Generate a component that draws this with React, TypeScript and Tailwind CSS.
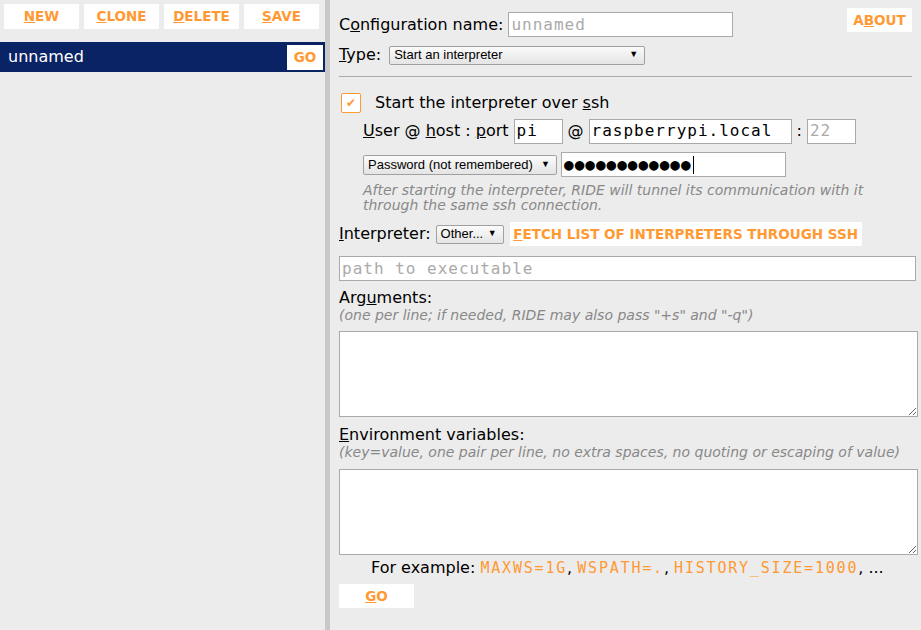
import React from 'react';

const orange = 'text-[#ff9933]';

function Btn({ children, className = '' }: { children: React.ReactNode; className?: string }) {
  return (
    <div
      className={`flex items-center justify-center bg-white font-['DejaVu_Sans',sans-serif] text-[13.5px] font-bold ${orange} ${className}`}
    >
      {children}
    </div>
  );
}

function Select({ label, className = '' }: { label: string; className?: string }) {
  return (
    <div
      className={`flex items-center justify-between rounded-[2px] border border-[#a0a0a0] bg-gradient-to-b from-[#fbfbfb] to-[#e4e4e4] pl-[4px] pr-[6px] font-['Liberation_Sans',sans-serif] text-[13px] text-black ${className}`}
    >
      <span>{label}</span>
      <span className="text-[9px]">▼</span>
    </div>
  );
}

const mono = "font-['DejaVu_Sans_Mono',monospace] text-[16px] tracking-[1px]";
const exMono = `${orange} font-['DejaVu_Sans_Mono',monospace] text-[15px] tracking-[1.8px]`;

export default function App() {
  return (
    <div className="flex h-[630px] w-[921px] overflow-hidden bg-[#ececec] font-['DejaVu_Sans',sans-serif] text-[16px] text-black">
      {/* left list */}
      <div className="w-[325px] shrink-0">
        <div className="flex gap-[5px] px-[4px] pt-[4px]">
          <Btn className="h-[25px] w-[75px]"><u>N</u>EW</Btn>
          <Btn className="h-[25px] w-[75px]"><u>C</u>LONE</Btn>
          <Btn className="h-[25px] w-[75px]"><u>D</u>ELETE</Btn>
          <Btn className="h-[25px] w-[75px]"><u>S</u>AVE</Btn>
        </div>
        <div className="mt-[13px] flex h-[30px] items-center justify-between bg-[#0a2364] pl-[8px] pr-[2px] text-white">
          <span>unnamed</span>
          <Btn className="h-[25px] w-[36px]">GO</Btn>
        </div>
      </div>

      <div className="w-[5px] shrink-0 bg-[#c8c8c8]" />

      {/* right form */}
      <div className="flex-1 pl-[9px] pr-[3px] pt-[8px]">
        <div className="flex items-start justify-between pr-[6px]">
          <div className="mt-[4px] flex h-[25px] items-center">
            <span>
              C<u>o</u>nfiguration name:
            </span>
            <div className={`ml-[5px] flex h-[25px] w-[225px] items-center border border-[#aaa] bg-white px-[2px] text-[#aaa] ${mono}`}>
              unnamed
            </div>
          </div>
          <Btn className="h-[24px] w-[65px]">
            A<u>B</u>OUT
          </Btn>
        </div>

        <div className="mt-[9px] flex h-[18px] items-center">
          <span>
            <u>T</u>ype:
          </span>
          <Select label="Start an interpreter" className="ml-[8px] h-[19px] w-[256px]" />
        </div>

        <div className="mr-[6px] mt-[12px] border-t border-[#aaa]" />

        <div className="ml-[2px] mt-[16px] flex h-[20px] items-center">
          <div className={`flex h-[20px] w-[20px] items-center justify-center rounded-[2px] border border-[#ff9933] bg-white text-[12px] ${orange}`}>
            ✔
          </div>
          <span className="ml-[14px]">
            Start the interpreter over <u>s</u>sh
          </span>
        </div>

        <div className="ml-[24px] mt-[6px] flex h-[24px] items-center">
          <span>
            <u>U</u>ser @ <u>h</u>ost : <u>p</u>ort
          </span>
          <div className={`ml-[5px] flex h-[25px] w-[49px] items-center border border-[#aaa] bg-white px-[2px] ${mono}`}>pi</div>
          <span className="ml-[5px] mr-[5px]">@</span>
          <div className={`flex h-[25px] w-[203px] items-center border border-[#aaa] bg-white px-[2px] ${mono}`}>
            raspberrypi.local
          </div>
          <span className="mx-[5px]">:</span>
          <div className={`flex h-[25px] w-[49px] items-center border border-[#aaa] bg-white px-[2px] text-[#aaa] ${mono}`}>22</div>
        </div>

        <div className="ml-[24px] mt-[9px] flex h-[25px] items-center">
          <Select label="Password (not remembered)" className="h-[20px] w-[194px]" />
          <div className={`ml-[4px] flex h-[25px] w-[225px] items-center border border-[#aaa] bg-white px-[2px] ${mono} tracking-[-0.6px]`}>
            <span>●●●●●●●●●●●●</span>
            <span className="ml-[1px] h-[18px] w-[1px] bg-black" />
          </div>
        </div>

        <div className="ml-[24px] mt-[6px] text-[14px] italic leading-[15px] text-[#888]">
          <div>After starting the interpreter, RIDE will tunnel its communication with it</div>
          <div>through the same ssh connection.</div>
        </div>

        <div className="mt-[9px] flex h-[24px] items-center">
          <span>
            <u>I</u>nterpreter:
          </span>
          <Select label="Other..." className="ml-[5px] h-[19px] w-[68px]" />
          <Btn className="ml-[6px] h-[24px] w-[352px]">
            <span>
              <u>F</u>ETCH LIST OF INTERPRETERS THROUGH SSH
            </span>
          </Btn>
        </div>

        <div className={`mt-[10px] mr-[2px] flex h-[25px] items-center border border-[#aaa] bg-white px-[2px] text-[#aaa] ${mono}`}>
          path to executable
        </div>

        <div className="mt-[8px] leading-[18px]">
          Arg<u>u</u>ments:
        </div>
        <div className="text-[14px] italic leading-[16px] text-[#888]">
          (one per line; if needed, RIDE may also pass "+s" and "-q")
        </div>
        <textarea className="mt-[8px] block h-[86px] w-full resize-y border border-[#aaa] bg-white" />

        <div className="mt-[9px] leading-[18px]">
          <u>E</u>nvironment variables:
        </div>
        <div className="text-[14px] italic leading-[16px] text-[#888]">
          (key=value, one pair per line, no extra spaces, no quoting or escaping of value)
        </div>
        <textarea className="mt-[9px] block h-[86px] w-full resize-y border border-[#aaa] bg-white" />

        <div className="ml-[32px] mt-[4px] leading-[18px]">
          For example: <span className={exMono}>MAXWS=1G</span>, <span className={exMono}>WSPATH=.</span>,{' '}
          <span className={exMono}>HISTORY_SIZE=1000</span>, ...
        </div>

        <Btn className="mt-[7px] h-[24px] w-[75px]">
          <span>
            <u>G</u>O
          </span>
        </Btn>
      </div>
    </div>
  );
}
